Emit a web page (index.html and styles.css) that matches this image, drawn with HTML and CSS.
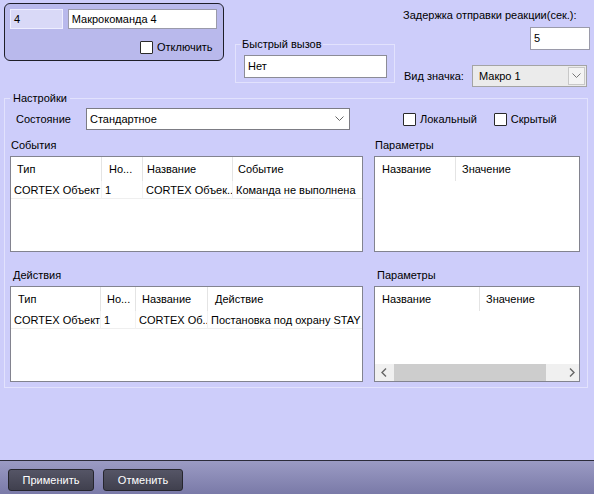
FILE: index.html
```html
<!DOCTYPE html>
<html lang="ru">
<head>
  <meta charset="UTF-8">
  <title>Макрокоманда 4</title>
  <link rel="stylesheet" href="styles.css">
</head>
<body>

  <div class="window">
    <div class="main">

      <div class="top">
        <div class="head-box">
          <div class="head-row">
            <div class="field id-field">4</div>
            <div class="field name-field">Макрокоманда 4</div>
          </div>
          <div class="check head-check"><span class="box"></span>Отключить</div>
        </div>

        <fieldset class="quick">
          <legend>Быстрый вызов</legend>
          <div class="field quick-field">Нет</div>
        </fieldset>

        <div class="right-col">
          <div class="delay-label">Задержка отправки реакции(сек.):</div>
          <div class="field delay-field">5</div>
          <div class="icon-row">
            <span>Вид значка:</span>
            <div class="combo combo-grey">
              <span>Макро 1</span>
              <span class="arrow-box">
                <svg width="9" height="6" viewBox="0 0 9 6"><polyline points="0.5,0.5 4.5,4.5 8.5,0.5" fill="none" stroke="#777" stroke-width="1"/></svg>
              </span>
            </div>
          </div>
        </div>
      </div>

      <fieldset class="settings">
        <legend>Настройки</legend>

        <div class="state-row">
          <span class="state-label">Состояние</span>
          <div class="combo combo-state">
            <span>Стандартное</span>
            <svg width="9" height="6" viewBox="0 0 9 6"><polyline points="0.5,0.5 4.5,4.5 8.5,0.5" fill="none" stroke="#666" stroke-width="1"/></svg>
          </div>
          <div class="check local-check"><span class="box"></span>Локальный</div>
          <div class="check hidden-check"><span class="box"></span>Скрытый</div>
        </div>

        <div class="tables">
          <div class="caption">События</div>
          <div class="caption">Параметры</div>

          <div class="list">
            <div class="list-head">
              <div class="hc ev1">Тип</div>
              <div class="hc ev2">Но...</div>
              <div class="hc ev3">Название</div>
              <div class="hc ev4">Событие</div>
            </div>
            <div class="list-row">
              <div class="dc ev1">CORTEX Объект</div>
              <div class="dc ev2">1</div>
              <div class="dc ev3">CORTEX Объек..</div>
              <div class="dc ev4">Команда не выполнена</div>
            </div>
          </div>

          <div class="list">
            <div class="list-head">
              <div class="hc pe1">Название</div>
              <div class="hc pe2">Значение</div>
            </div>
          </div>

          <div class="caption caption-low">Действия</div>
          <div class="caption caption-low">Параметры</div>

          <div class="list">
            <div class="list-head">
              <div class="hc ac1">Тип</div>
              <div class="hc ac2">Но...</div>
              <div class="hc ac3">Название</div>
              <div class="hc ac4">Действие</div>
            </div>
            <div class="list-row">
              <div class="dc ac1">CORTEX Объект</div>
              <div class="dc ac2">1</div>
              <div class="dc ac3">CORTEX Об..</div>
              <div class="dc ac4">Постановка под охрану STAY</div>
            </div>
          </div>

          <div class="list">
            <div class="list-head">
              <div class="hc pa1">Название</div>
              <div class="hc pa2">Значение</div>
            </div>
            <div class="hscroll">
              <svg class="sb-arrow" width="6" height="9" viewBox="0 0 6 9"><polyline points="5,0.5 1,4.5 5,8.5" fill="none" stroke="#666" stroke-width="1.4"/></svg>
              <div class="sb-thumb"></div>
              <svg class="sb-arrow" width="6" height="9" viewBox="0 0 6 9"><polyline points="1,0.5 5,4.5 1,8.5" fill="none" stroke="#666" stroke-width="1.4"/></svg>
            </div>
          </div>
        </div>
      </fieldset>

    </div>

    <div class="footer">
      <button class="btn btn-apply">Применить</button>
      <button class="btn btn-cancel">Отменить</button>
    </div>
  </div>

</body>
</html>
```

FILE: styles.css
```css
:root {
  --bg: #cdcdfa;
  --box-bg: #b9b9ec;
  --group-line: #e2e2fd;
  --list-border: #82838f;
  --divider: #e4e4e4;
}

* {
  box-sizing: border-box;
}

body {
  margin: 0;
  font-family: 'Liberation Sans', Arial, sans-serif;
  font-size: 11px;
  line-height: 14px;
  color: #000;
}

.window {
  width: 594px;
  height: 494px;
  display: flex;
  flex-direction: column;
  background-color: var(--bg);
}

.main {
  height: 460px;
}

/* top area */

.top {
  display: flex;
  align-items: flex-start;
  height: 91px;
  padding: 3px 4px 0 4px;
}

.head-box {
  width: 220px;
  height: 58px;
  padding: 5px 6px 0 5px;
  border: 1px solid #1e1e28;
  border-radius: 6px;
  background-color: var(--box-bg);
}

.head-row {
  display: flex;
  gap: 5px;
}

.field {
  height: 20px;
  padding: 0 3px;
  line-height: 18px;
  background: #fff;
  border: 1px solid #9a9aaa;
}

.id-field {
  width: 53px;
  background: #d9d9f7;
  border-color: #eeeeff;
}

.name-field {
  width: 150px;
}

.check {
  display: flex;
  align-items: center;
  gap: 4px;
}

.box {
  width: 13px;
  height: 13px;
  background: #fff;
  border: 1px solid #2a2a2a;
  border-radius: 1px;
}

.head-check {
  margin-top: 11px;
  padding-left: 130px;
}

.quick {
  width: 160px;
  margin: 34px 0 0 11px;
  padding: 4px 7px 4px 8px;
  border: 1px solid var(--group-line);
}

.quick legend {
  margin-left: -3px;
  padding: 0 1px;
}

.quick-field {
  width: 143px;
  height: 23px;
  line-height: 21px;
  border-color: #8c8c96;
}

.right-col {
  width: 187px;
  margin-left: auto;
  padding-top: 5px;
}

.delay-label {
  white-space: nowrap;
}

.delay-field {
  width: 60px;
  height: 23px;
  line-height: 21px;
  margin: 5px 0 0 auto;
}

.icon-row {
  display: flex;
  align-items: center;
  margin-top: 15px;
  padding-left: 1px;
}

.combo {
  display: flex;
  align-items: center;
  justify-content: space-between;
  height: 22px;
}

.combo-grey {
  width: 115px;
  margin: 0 3px 0 auto;
  padding: 0 1px 0 6px;
  background: #ebebeb;
  border: 1px solid #a4a4a4;
}

.arrow-box {
  display: flex;
  align-items: center;
  justify-content: center;
  width: 17px;
  height: 18px;
  background: #f4f4f4;
  border: 1px solid #c8c8c8;
}

/* settings group */

.settings {
  margin: 0 6px 0 4px;
  padding: 3px 5px 5px 5px;
  border: 1px solid var(--group-line);
}

.settings legend {
  padding: 0 3px;
}

.state-row {
  display: flex;
  align-items: center;
  height: 22px;
}

.state-label {
  width: 76px;
  padding-left: 6px;
}

.combo-state {
  width: 264px;
  padding: 0 5px 0 3px;
  background: #fff;
  border: 1px solid #7c7c84;
}

.local-check {
  margin-left: 53px;
}

.hidden-check {
  margin-left: 17px;
}

.tables {
  display: grid;
  grid-template-columns: 353px 206px;
  column-gap: 11px;
}

.caption {
  margin: 8px 0 4px 1px;
}

.caption-low {
  margin-top: 16px;
  padding-left: 2px;
}

.list {
  display: flex;
  flex-direction: column;
  height: 96px;
  background: #fff;
  border: 1px solid var(--list-border);
  overflow: hidden;
}

.list-head,
.list-row {
  display: flex;
  white-space: nowrap;
}

.list-head {
  height: 24px;
}

.list-row {
  height: 18px;
}

.hc,
.dc {
  overflow: hidden;
  flex-shrink: 0;
}

.hc {
  line-height: 24px;
  padding-left: 5px;
  border-right: 1px solid var(--divider);
}

.dc {
  line-height: 18px;
  padding-left: 3px;
  border-right: 1px solid #f2f2f2;
  border-bottom: 1px solid #efefef;
}

.hc:last-child,
.dc:last-child {
  border-right: none;
}

/* events columns */
.ev1 { width: 91px; }
.ev2 { width: 41px; }
.ev3 { width: 90px; }
.ev4 { width: 129px; }
.hc.ev1 { padding-left: 6px; }
.hc.ev2 { padding-left: 7px; }
.hc.ev3 { padding-left: 4px; }

/* actions columns */
.ac1 { width: 90px; }
.ac2 { width: 35px; }
.ac3 { width: 72px; }
.ac4 { width: 154px; }
.hc.ac1 { padding-left: 7px; }
.hc.ac2 { padding-left: 6px; }
.hc.ac3 { padding-left: 6px; }
.hc.ac4 { padding-left: 7px; }

/* params columns */
.pe1 { width: 81px; }
.pe2 { width: 120px; }
.pa1 { width: 105px; }
.pa2 { width: 99px; }
.hc.pe1,
.hc.pa1 { padding-left: 7px; }
.hc.pe2,
.hc.pa2 { padding-left: 6px; }

.hscroll {
  display: flex;
  align-items: center;
  height: 17px;
  margin-top: auto;
  padding: 0 4px 0 6px;
  background: #f0f0f0;
}

.sb-thumb {
  width: 152px;
  height: 17px;
  margin: 0 auto 0 7px;
  background: #cdcdcd;
}

/* footer */

.footer {
  display: flex;
  gap: 9px;
  height: 34px;
  padding: 8px 0 0 8px;
  border-top: 1px solid #2c2c3a;
  background: linear-gradient(#9b9bc4, #7a7aa8);
}

.btn {
  height: 22px;
  padding: 0;
  font-family: 'Liberation Sans', Arial, sans-serif;
  font-size: 11px;
  color: #fff;
  background: linear-gradient(#555566, #40404e);
  border: 1px solid #26262e;
  border-radius: 3px;
}

.btn-apply {
  width: 86px;
}

.btn-cancel {
  width: 80px;
}
```
